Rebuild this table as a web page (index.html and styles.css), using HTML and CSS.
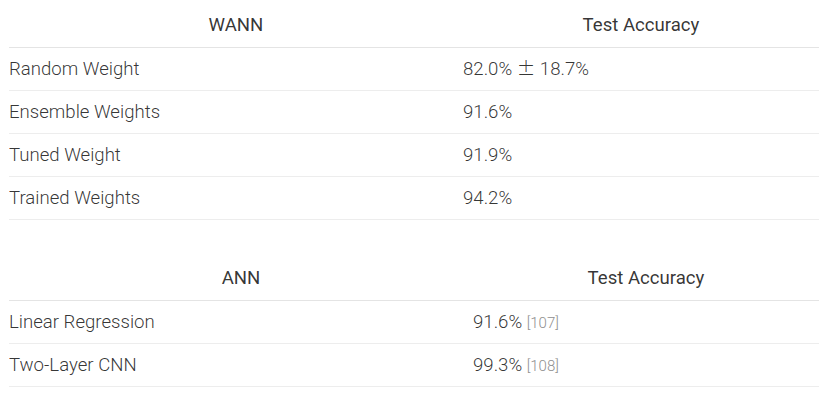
FILE: index.html
```html
<!DOCTYPE html>
<html>
<head>
<meta charset="utf-8">
<link rel="stylesheet" href="styles.css">
</head>
<body>
<div class="page">
  <table class="results results-wann">
    <thead>
      <tr><th>WANN</th><th>Test Accuracy</th></tr>
    </thead>
    <tbody>
      <tr><td>Random Weight</td><td>82.0% <span class="pm">±</span> 18.7%</td></tr>
      <tr><td>Ensemble Weights</td><td>91.6%</td></tr>
      <tr><td>Tuned Weight</td><td>91.9%</td></tr>
      <tr><td>Trained Weights</td><td>94.2%</td></tr>
    </tbody>
  </table>
  <table class="results results-ann">
    <thead>
      <tr><th>ANN</th><th>Test Accuracy</th></tr>
    </thead>
    <tbody>
      <tr><td>Linear Regression</td><td>91.6% <span class="cite">[107]</span></td></tr>
      <tr><td>Two-Layer CNN</td><td>99.3% <span class="cite">[108]</span></td></tr>
    </tbody>
  </table>
</div>
</body>
</html>
```

FILE: styles.css
```css
html, body {
  margin: 0;
  padding: 0;
  background: #ffffff;
}

.page {
  padding-left: 9px;
  display: flex;
  flex-direction: column;
  gap: 33px;
  font-family: Roboto, "Noto Sans", sans-serif;
}

.results {
  width: 810px;
  border-collapse: collapse;
}

.results th {
  font-weight: 400;
  font-size: 18.6px;
  color: rgba(0, 0, 0, 0.8);
  text-align: center;
  padding: 13px 0 9px;
  line-height: 25px;
  border-bottom: 1px solid #e4e4e4;
}

.results td {
  font-weight: 300;
  font-size: 18.6px;
  color: rgba(0, 0, 0, 0.8);
  text-align: left;
  padding: 8px 0;
  line-height: 26px;
  border-bottom: 1px solid #ededed;
}

.results-wann th:first-child,
.results-wann td:first-child {
  width: 454px;
}

.results-ann th:first-child,
.results-ann td:first-child {
  width: 464px;
}

.pm {
  font-family: "Noto Sans CJK JP", sans-serif;
  font-weight: 300;
  line-height: 0;
}

.cite {
  font-size: 15px;
  line-height: 0;
  color: #8f8f8f;
}
```
